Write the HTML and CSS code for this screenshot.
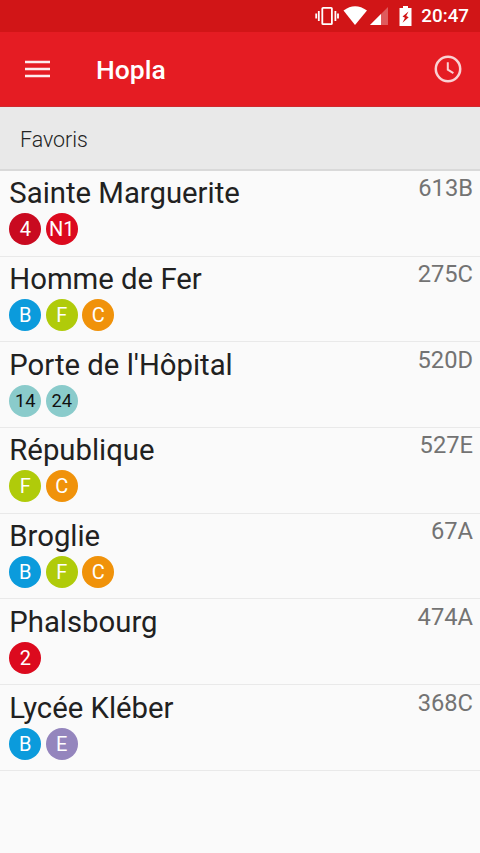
FILE: index.html
```html
<!DOCTYPE html>
<html lang="fr">
<head>
<meta charset="utf-8">
<title>Hopla</title>
<link rel="stylesheet" href="styles.css">
</head>
<body>
<div class="status">
  <svg class="sys-icons" width="98" height="32" viewBox="0 0 98 32">
    <g fill="none" stroke="#fff" stroke-width="1.8"><rect x="7.300" y="7.800" width="9.600" height="16.400" rx=".8"/><path d="M3.800 11v10M1.200 13.500v5M20.400 11v10M23 13.500v5"/></g>
    <path fill="#fff" d="M28.500 10.500Q40 2 52 10.500L40 25Z"/>
    <path fill="#fff" fill-opacity=".3" d="M73 7v18H55Z"/>
    <path fill="#fff" d="M66 14v11H55Z"/>
    <path fill="#fff" fill-rule="evenodd" d="M88 8V6h5v2h3.500v18H84.500V8ZM93.500 11.500L87.500 16.500l2.500 1.300l-2.500 5l6.200-5.600l-2.500-1.200Z"/>
  </svg>
  <span class="clock">20:47</span>
</div>
<header class="bar">
  <svg class="menu" width="26" height="20" viewBox="0 0 26 20"><path d="M0 2.900h25M0 10h25M0 17.100h25" stroke="#fff" stroke-opacity=".92" stroke-width="2.500"/></svg>
  <h1>Hopla</h1>
  <svg class="history" width="28" height="28" viewBox="0 0 28 28"><g fill="none" stroke="#fff" stroke-opacity=".8" stroke-width="2.500"><circle cx="14" cy="14" r="12.200"/><path d="M13.800 7.300v7.400l5.600 3.400" stroke-width="2"/></g></svg>
</header>
<h2 class="section">Favoris</h2>
<ul class="stops">
  <li><div><h3>Sainte Marguerite</h3><p><b class="r4">4</b><b class="n1">N1</b></p></div><span>613B</span></li>
  <li><div><h3>Homme de Fer</h3><p><b class="blue">B</b><b class="green">F</b><b class="orange">C</b></p></div><span>275C</span></li>
  <li><div><h3>Porte de l'Hôpital</h3><p><b class="teal">14</b><b class="teal">24</b></p></div><span>520D</span></li>
  <li><div><h3>République</h3><p><b class="green">F</b><b class="orange">C</b></p></div><span>527E</span></li>
  <li><div><h3>Broglie</h3><p><b class="blue">B</b><b class="green">F</b><b class="orange">C</b></p></div><span>67A</span></li>
  <li><div><h3>Phalsbourg</h3><p><b class="n1">2</b></p></div><span>474A</span></li>
  <li><div><h3>Lycée Kléber</h3><p><b class="blue">B</b><b class="violet">E</b></p></div><span>368C</span></li>
</ul>
</body>
</html>
```
FILE: styles.css
```css
* { box-sizing: border-box; margin: 0; padding: 0; }
body { background: #fafafa; font-family: Roboto, sans-serif; color: #212121; overflow: hidden; }
.status { height: 32px; background: #d11517; display: flex; justify-content: flex-end; align-items: center; padding-right: 11px; }
.clock { margin-left: 8px; color: #fff; font-size: 18.800px; font-weight: 500; line-height: 32px; }
.bar { height: 75px; background: #e51c23; border-bottom: 1px solid #cf2a2f; color: #fff; display: flex; align-items: center; padding: 0 18px 0 25px; }
.menu { margin-bottom: 1px; }
.bar h1 { margin-left: 45px; padding-top: 1px; font-size: 26.500px; font-weight: 500; }
.history { margin-left: auto; }
.section { height: 64px; background: #e9e9e9; border-bottom: 2px solid #d9d9d9; padding-left: 20px; font-size: 21.400px; font-weight: 300; line-height: 65px; color: #222; }
.stops { list-style: none; }
.stops li { height: 85.700px; border-bottom: 1px solid #e9e9e9; display: flex; justify-content: space-between; padding: 4.400px 7px 0 9.300px; }
.stops h3 { font-size: 29.300px; line-height: 37px; font-weight: 400; white-space: nowrap; }
.stops p { display: flex; gap: 4.500px; margin-top: 1px; }
.stops b { width: 32px; height: 32px; border-radius: 50%; color: #fff; font-size: 20px; line-height: 33px; font-weight: 400; text-align: center; }
.stops span { margin-top: -1px; font-size: 23.700px; line-height: 28px; color: #737373; }
.stops .r4 { background: #c90a20; }
.stops .n1 { background: #dc0a1e; }
.stops .blue { background: #0b9bdc; }
.stops .green { background: #b0cb0a; }
.stops .orange { background: #f0920a; }
.stops .teal { background: #8acbcb; color: #111; font-size: 18.300px; line-height: 32px; }
.stops .violet { background: #9485bd; }
```
